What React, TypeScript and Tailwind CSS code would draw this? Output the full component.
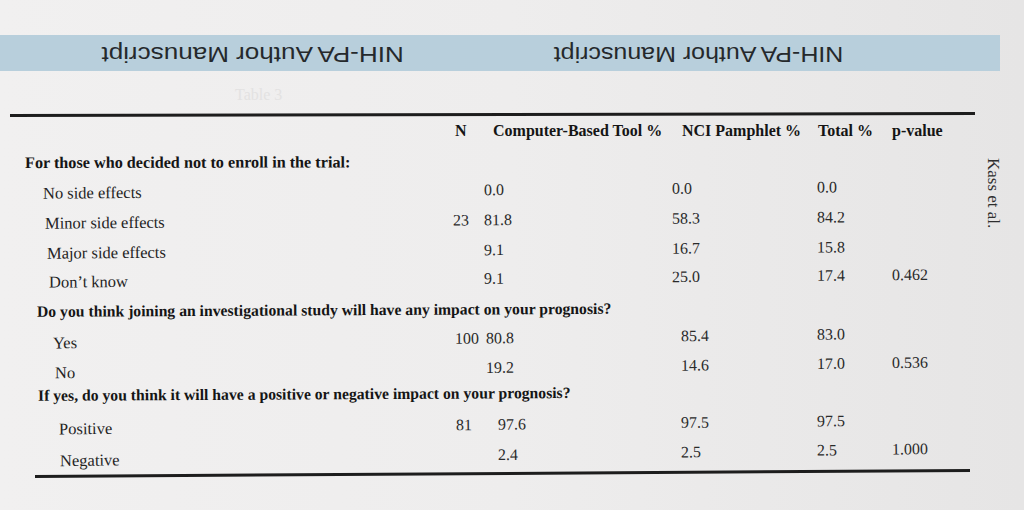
import React from "react";

type RowProps = {
  grid: string;
  h: string;
  pl: string;
  rot: string;
  label: string;
  vals: string[];
};

const Row = ({ grid, h, pl, rot, label, vals }: RowProps) => (
  <div className={`grid ${grid} ${h} items-center origin-left ${rot} text-[16px] text-[#242424]`}>
    <div className={`${pl} text-[16.5px]`}>{label}</div>
    {vals.map((v, i) => (
      <div key={i} className="text-[#2a2a2a]">
        {v}
      </div>
    ))}
  </div>
);

const Heading = ({ h, pl, rot, size, text }: { h: string; pl: string; rot: string; size: string; text: string }) => (
  <div className={`flex items-center whitespace-nowrap ${h} ${pl} ${size} origin-left ${rot} font-bold text-[#151515]`}>
    {text}
  </div>
);

export default function App() {
  const g1 = "grid-cols-[453px_31px_188px_145px_75px_80px]";
  const g2 = "grid-cols-[455px_31px_195px_136px_75px_80px]";
  const g3 = "grid-cols-[456px_42px_183px_136px_75px_80px]";
  return (
    <div className="w-[1024px] h-[510px] overflow-hidden bg-gradient-to-r from-[#f1f0f0] via-[#eeeded] to-[#e6e5e5] pt-[35px] font-['Liberation_Serif',serif]">
      {/* blue running header band, printed upside down */}
      <div className="flex h-[36px] w-[1000px] items-center bg-[#b8cfdc] font-['Liberation_Sans',Arial,sans-serif] text-[22px] text-[#25292c]">
        <span className="ml-[125px] mt-[3px] rotate-180 scale-x-[1.185] whitespace-nowrap">NIH-PA Author Manuscript</span>
        <span className="ml-[191px] mt-[3px] rotate-180 scale-x-[1.135] whitespace-nowrap">NIH-PA Author Manuscript</span>
      </div>

      <div className="flex">
        <div className="w-[980px]">
          <div className="flex h-[42px] items-end pl-[235px] pb-[6px] text-[16px] text-[#e3e2e2]">Table 3</div>
          <div className="ml-[10px] h-[3px] w-[965px] rotate-[-0.12deg] bg-[#1d1d1d]" />

          {/* column header */}
          <div className="grid h-[30px] grid-cols-[455px_38px_189px_136px_74px_80px] items-center whitespace-nowrap text-[16px] font-bold text-[#151515]">
            <div />
            <div>N</div>
            <div>Computer-Based Tool %</div>
            <div>NCI Pamphlet %</div>
            <div>Total %</div>
            <div>p-value</div>
          </div>

          <Heading h="h-[34px]" pl="pl-[25px]" size="text-[16.2px]" rot="rotate-[-0.1deg]" text="For those who decided not to enroll in the trial:" />
          <Row grid={g1} h="h-[28px]" pl="pl-[43px]" rot="rotate-[-0.45deg]" label="No side effects" vals={["", "0.0", "0.0", "0.0", ""]} />
          <Row grid={g1} h="h-[32px]" pl="pl-[45px]" rot="rotate-[-0.45deg]" label="Minor side effects" vals={["23", "81.8", "58.3", "84.2", ""]} />
          <Row grid={g1} h="h-[28px]" pl="pl-[47px]" rot="rotate-[-0.45deg]" label="Major side effects" vals={["", "9.1", "16.7", "15.8", ""]} />
          <Row grid={g1} h="h-[30px]" pl="pl-[49px]" rot="rotate-[-0.5deg]" label="Don’t know" vals={["", "9.1", "25.0", "17.4", "0.462"]} />

          <Heading h="h-[28px]" pl="pl-[37px]" size="text-[15.7px]" rot="rotate-[-0.3deg]" text="Do you think joining an investigational study will have any impact on your prognosis?" />
          <Row grid={g2} h="h-[36px]" pl="pl-[53px]" rot="rotate-[-0.65deg]" label="Yes" vals={["100", "80.8", "85.4", "83.0", ""]} />
          <Row grid={g2} h="h-[20px]" pl="pl-[55px]" rot="rotate-[-0.7deg]" label="No" vals={["", "19.2", "14.6", "17.0", "0.536"]} />

          <Heading h="h-[28px]" pl="pl-[38px]" size="text-[15.7px]" rot="rotate-[-0.3deg]" text="If yes, do you think it will have a positive or negative impact on your prognosis?" />
          <Row grid={g3} h="h-[40px]" pl="pl-[59px]" rot="rotate-[-0.6deg]" label="Positive" vals={["81", "97.6", "97.5", "97.5", ""]} />
          <Row grid={g3} h="h-[18px]" pl="pl-[60px]" rot="rotate-[-0.8deg]" label="Negative" vals={["", "2.4", "2.5", "2.5", "1.000"]} />

          <div className="ml-[35px] mt-[4px] h-[3px] w-[935px] rotate-[-0.37deg] bg-[#1d1d1d]" />
        </div>

        <div className="flex-1 pt-[87px]">
          <div className="text-[17px] text-[#2e2e2e] [writing-mode:vertical-rl]">Kass et al.</div>
        </div>
      </div>
    </div>
  );
}
